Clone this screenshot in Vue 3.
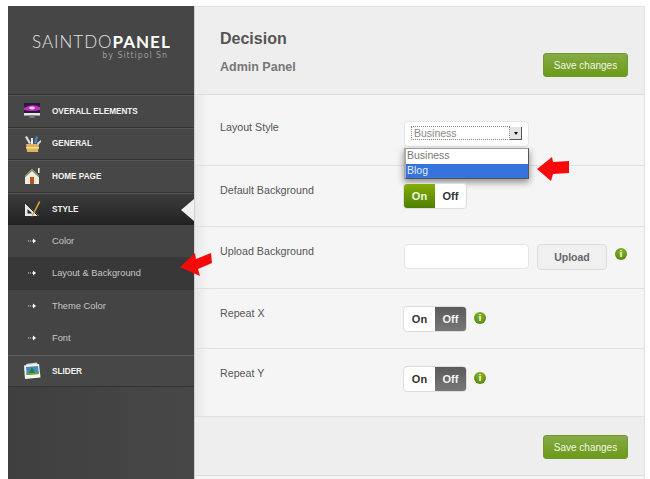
<script setup>
const menu = [
  { label: 'OVERALL ELEMENTS', icon: 'screen' },
  { label: 'GENERAL', icon: 'tools' },
  { label: 'HOME PAGE', icon: 'home' },
  { label: 'STYLE', icon: 'style', active: true },
];
const subMenu = [
  { label: 'Color' },
  { label: 'Layout & Background', active: true },
  { label: 'Theme Color' },
  { label: 'Font' },
];
</script>

<template>
  <div class="page">
    <aside class="sidebar">
      <div class="logo">
        <div class="logo-name">SAINTDO<b>PANEL</b></div>
        <div class="logo-by">by Sittipol Sn</div>
      </div>
      <nav>
        <a v-for="item in menu" :key="item.label" class="item" :class="{ active: item.active }">
          <svg class="icon" viewBox="0 0 18 18">
            <template v-if="item.icon === 'screen'">
              <rect x="1" y="1" width="16" height="10" fill="#2a1a3a" />
              <path d="M1 6 Q9 1 17 5 V8 Q9 10 1 8Z" fill="#c030c0" />
              <ellipse cx="9" cy="6" rx="3" ry="1.4" fill="#f3c8f0" />
              <rect x="1" y="11" width="16" height="2.5" fill="#e8e8e8" />
              <rect x="6.5" y="13.5" width="5" height="2.5" fill="#777" />
            </template>
            <template v-else-if="item.icon === 'tools'">
              <path d="M3 9 H16 L15 17 H4Z" fill="#e0b25c" />
              <rect x="3" y="12" width="13" height="1.5" fill="#f4dca0" />
              <path d="M2 2 L4 1 L8 8 L6 9Z" fill="#ddd" />
              <path d="M8 3 H10 V9 H8Z" fill="#eee" />
              <path d="M13 1 L15 2 L13 9 L11 8Z" fill="#4a86c8" />
              <path d="M14 8 L18 5 L18 7 L15 10Z" fill="#ddd" />
            </template>
            <template v-else-if="item.icon === 'home'">
              <path d="M9 2 L16 9 V17 H2 V9Z" fill="#f2ece0" />
              <path d="M9 2 L2 9 V10.5 L9 4 L16 10.5 V9Z" fill="#8a8378" />
              <rect x="7" y="10" width="4" height="7" fill="#b5561a" />
              <rect x="15" y="1" width="1.6" height="5" fill="#eee" />
            </template>
            <template v-else>
              <path d="M2 3 V16 H16Z M4.5 9 V13.5 H9.5Z" fill="#e8e8e8" fill-rule="evenodd" />
              <path d="M2 3 L15 16" stroke="#222" stroke-width="1" />
              <path d="M16 1 L9 15 L8.6 17 L10.2 15.6 L17.4 2Z" fill="#d8a030" />
            </template>
          </svg>
          <span>{{ item.label }}</span>
          <i v-if="item.active" class="notch"></i>
        </a>
        <a v-for="sub in subMenu" :key="sub.label" class="sub" :class="{ active: sub.active }">
          <svg class="dash" viewBox="0 0 8 6">
            <path d="M0 3 H1 M2 3 H3 M4 3 H5" stroke="#ddd" stroke-width="1" />
            <path d="M5 0.5 L8 3 L5 5.5Z" fill="#fff" />
          </svg>
          <span>{{ sub.label }}</span>
          <svg v-if="sub.active" class="red-arrow nav-arrow" viewBox="0 0 32 24">
            <path d="M0 15 L15 1 L16 7 L31 1 L32 11 L18 17 L20 24Z" fill="#f50a0a" />
          </svg>
        </a>
        <a class="item slider">
          <svg class="icon" viewBox="0 0 18 18">
            <path d="M3 2 L14 0.5 L15 4 L4 5Z" fill="#ddd" />
            <path d="M1 3.5 L16 2 L17.5 15.5 L2 17Z" fill="#f7f6ea" />
            <path d="M3 5 L15 4 L16 12 L3.6 13Z" fill="#3d8ccc" />
            <path d="M3.4 11 L16 10 L16 12 L3.6 13Z" fill="#6fa030" />
            <path d="M9 5 L12 11 H6Z" fill="#2f7d3a" />
          </svg>
          <span>SLIDER</span>
        </a>
      </nav>
    </aside>

    <main class="main">
      <header class="head">
        <div>
          <h1>Decision</h1>
          <h2>Admin Panel</h2>
        </div>
        <button class="save">Save changes</button>
      </header>

      <section class="row row-layout">
        <label>Layout Style</label>
        <div class="control">
          <div class="select">
            <div class="select-inner">
              <span class="select-value">Business</span>
              <span class="select-btn"><i></i></span>
            </div>
          </div>
          <ul class="dropdown">
            <li>Business</li>
            <li class="picked">Blog</li>
          </ul>
          <svg class="red-arrow drop-arrow" viewBox="0 0 32 24">
            <path d="M0 12 L15 0 L16 5 L32 4 L32 16 L16 17 L14 24Z" fill="#f50a0a" />
          </svg>
        </div>
      </section>

      <section class="row row-bg">
        <label>Default Background</label>
        <div class="control">
          <div class="toggle">
            <span class="on selected">On</span>
            <span>Off</span>
          </div>
        </div>
      </section>

      <section class="row row-upload">
        <label>Upload Background</label>
        <div class="control">
          <input class="file" type="text" />
          <button class="upload">Upload</button>
          <span class="info">i</span>
        </div>
      </section>

      <section class="row row-repeat">
        <label>Repeat X</label>
        <div class="control">
          <div class="toggle">
            <span>On</span>
            <span class="off selected">Off</span>
          </div>
          <span class="info">i</span>
        </div>
      </section>

      <section class="row row-repeat row-last">
        <label>Repeat Y</label>
        <div class="control">
          <div class="toggle">
            <span>On</span>
            <span class="off selected">Off</span>
          </div>
          <span class="info">i</span>
        </div>
      </section>

      <footer class="foot">
        <button class="save">Save changes</button>
      </footer>
      <div class="tail"></div>
    </main>
  </div>
</template>

<style>
html, body {
  margin: 0;
  background: #fff;
}
</style>

<style scoped>
.page {
  display: flex;
  width: 650px;
  height: 479px;
  box-sizing: border-box;
  padding: 6px 5px 0 8px;
  overflow: hidden;
  background: #fff;
  font-family: "Liberation Sans", Arial, sans-serif;
}
.sidebar {
  width: 186px;
  flex: none;
  background: linear-gradient(90deg, #3f3f3f, #474747);
  color: #fff;
  border-right: 1px solid #cfcfcf;
}
.logo {
  height: 89px;
  padding-top: 27px;
  box-sizing: border-box;
  border-bottom: 1px solid #333;
  background: #464646;
}
.logo-name {
  font-family: Lato, sans-serif;
  font-weight: 300;
  font-size: 17px;
  line-height: 18px;
  letter-spacing: 1px;
  padding-left: 24px;
  color: #e2e2e2;
  white-space: nowrap;
}
.logo-name b {
  font-weight: 700;
  color: #fff;
}
.logo-by {
  font-family: "DejaVu Sans", sans-serif;
  font-size: 8px;
  line-height: 10px;
  letter-spacing: 0.9px;
  text-align: right;
  padding-right: 26px;
  color: #9a9a9a;
}
.item {
  position: relative;
  display: flex;
  align-items: center;
  height: 32.5px;
  box-sizing: border-box;
  padding-left: 15px;
  border-top: 1px solid #565656;
  border-bottom: 1px solid #333;
  background: #474747;
  font-size: 8.2px;
  font-weight: bold;
  color: #f2f2f2;
}
.item.active {
  height: 32px;
  background: linear-gradient(#3c3c3c, #222);
  border-bottom: 0;
}
.icon {
  width: 18px;
  height: 18px;
  flex: none;
  margin-right: 11px;
}
.notch {
  position: absolute;
  right: 0;
  top: 5px;
  width: 0;
  height: 0;
  border-top: 11px solid transparent;
  border-bottom: 11px solid transparent;
  border-right: 13px solid #f1f1f1;
}
.sub {
  position: relative;
  display: flex;
  align-items: center;
  height: 32.5px;
  padding-left: 20px;
  font-size: 9.3px;
  color: #c6c6c6;
  background: #444;
}
.sub.active {
  background: #383838;
}
.dash {
  width: 8px;
  height: 6px;
  flex: none;
  margin-right: 16px;
}
.slider {
  border-top-color: #5c5c5c;
  padding-top: 1px;
}
.red-arrow {
  position: absolute;
  width: 32px;
  height: 24px;
}
.nav-arrow {
  left: 172px;
  top: -5px;
}
.main {
  flex: 1;
  min-width: 0;
  border-right: 1px solid #e2e2e2;
  border-top: 1px solid #e2e2e2;
  color: #555;
}
.head {
  display: flex;
  justify-content: space-between;
  align-items: flex-start;
  height: 88px;
  box-sizing: border-box;
  padding: 22px 16px 0 25px;
  background: #eee;
  border-bottom: 1px solid #ddd;
}
h1 {
  margin: 0;
  font-size: 16px;
  line-height: 19px;
  color: #555;
}
h2 {
  margin: 12px 0 0;
  font-size: 12.5px;
  line-height: 15px;
  color: #777;
}
.save {
  width: 85px;
  height: 24px;
  padding: 0;
  margin-top: 24px;
  border: 1px solid #6e9a2a;
  border-radius: 3px;
  background: linear-gradient(#86ab46, #6b9a18);
  color: #f2f7e6;
  font: 10px "Liberation Sans", Arial, sans-serif;
}
.row {
  display: flex;
  box-sizing: border-box;
  padding-left: 25px;
  background: linear-gradient(90deg, #e9e9e9, #f5f5f5 14px);
  border-bottom: 1px solid #e0e0e0;
  font-size: 10.7px;
  color: #555;
}
.row label {
  width: 184px;
  flex: none;
  line-height: 13px;
}
.control {
  position: relative;
  display: flex;
  align-items: flex-start;
}
.row-layout { height: 71px; padding-top: 26px; }
.row-bg { height: 61px; padding-top: 18px; }
.row-upload { height: 62px; padding-top: 17px; }
.row-repeat { height: 60px; padding-top: 18px; }
.row-last { height: 68px; }
.row-bg .control { margin: -1px 0 0 -1px; }
.row-upload label { padding-top: 1px; }
.row-repeat .control { margin: -1px 0 0 -1px; }
.select {
  width: 125px;
  height: 26px;
  box-sizing: border-box;
  padding: 4px 6px 0 6px;
  background: #fff;
  border: 1px solid #e6e6e6;
  border-radius: 4px;
}
.select-inner {
  display: flex;
  align-items: flex-start;
}
.select-value {
  flex: 1;
  height: 12px;
  border: 1px dotted #888;
  font-size: 10.5px;
  line-height: 12px;
  color: #888;
  padding-left: 2px;
}
.select-btn {
  display: flex;
  align-items: center;
  justify-content: center;
  width: 11px;
  height: 12px;
  margin-top: 1px;
  background: #e4e4e4;
  border-right: 1px solid #555;
  border-bottom: 1px solid #555;
}
.select-btn i {
  border-top: 3px solid #111;
  border-left: 2.5px solid transparent;
  border-right: 2.5px solid transparent;
}
.dropdown {
  position: absolute;
  left: 0;
  top: 27px;
  width: 125px;
  box-sizing: border-box;
  margin: 0;
  padding: 0;
  list-style: none;
  background: #fff;
  border: 1px solid #555;
  border-top-color: #999;
  border-left: 2px solid #aaa;
  box-shadow: 0 3px 7px rgba(0, 0, 0, 0.45);
  font-size: 10.5px;
  color: #777;
}
.dropdown li {
  height: 14.5px;
  line-height: 13px;
  padding-left: 1px;
}
.dropdown .picked {
  background: #3673dc;
  color: #e4ecfa;
}
.drop-arrow {
  left: 133px;
  top: 36px;
}
.toggle {
  display: flex;
  width: 64px;
  height: 26px;
  box-sizing: border-box;
  background: #fff;
  border: 1px solid #ddd;
  border-radius: 4px;
  overflow: hidden;
  font-size: 11px;
  font-weight: bold;
  color: #333;
}
.toggle span {
  flex: 1;
  display: flex;
  align-items: center;
  justify-content: center;
}
.toggle .on {
  background: linear-gradient(#86ad06, #4e7f05);
  color: #f2f7e6;
}
.toggle .off {
  background: linear-gradient(#5b5b5b, #777);
  color: #f4f4f4;
}
.file {
  width: 125px;
  height: 25px;
  box-sizing: border-box;
  padding: 0;
  background: #fff;
  border: 1px solid #e4e4e4;
  border-radius: 4px;
  outline: 0;
}
.upload {
  width: 70px;
  height: 26px;
  padding: 0;
  margin-left: 8px;
  background: #f0f0f0;
  border: 1px solid #ddd;
  border-radius: 4px;
  color: #666;
  font: bold 10.5px "Liberation Sans", Arial, sans-serif;
}
.info {
  display: flex;
  align-items: center;
  justify-content: center;
  width: 12px;
  height: 12px;
  margin: 6px 0 0 7px;
  border-radius: 50%;
  background: radial-gradient(circle at 50% 30%, #8cb52a, #4c7d06);
  color: #fff;
  font: bold 9px/12px "Liberation Sans", Arial, sans-serif;
}
.row-upload .info { margin-left: 8px; margin-top: 4px; }
.foot {
  display: flex;
  justify-content: flex-end;
  height: 59px;
  box-sizing: border-box;
  padding-right: 16px;
  background: #eee;
  border-bottom: 1px solid #ddd;
}
.foot .save {
  margin-top: 18px;
}
.tail {
  height: 4px;
  background: #f5f5f5;
}
</style>
